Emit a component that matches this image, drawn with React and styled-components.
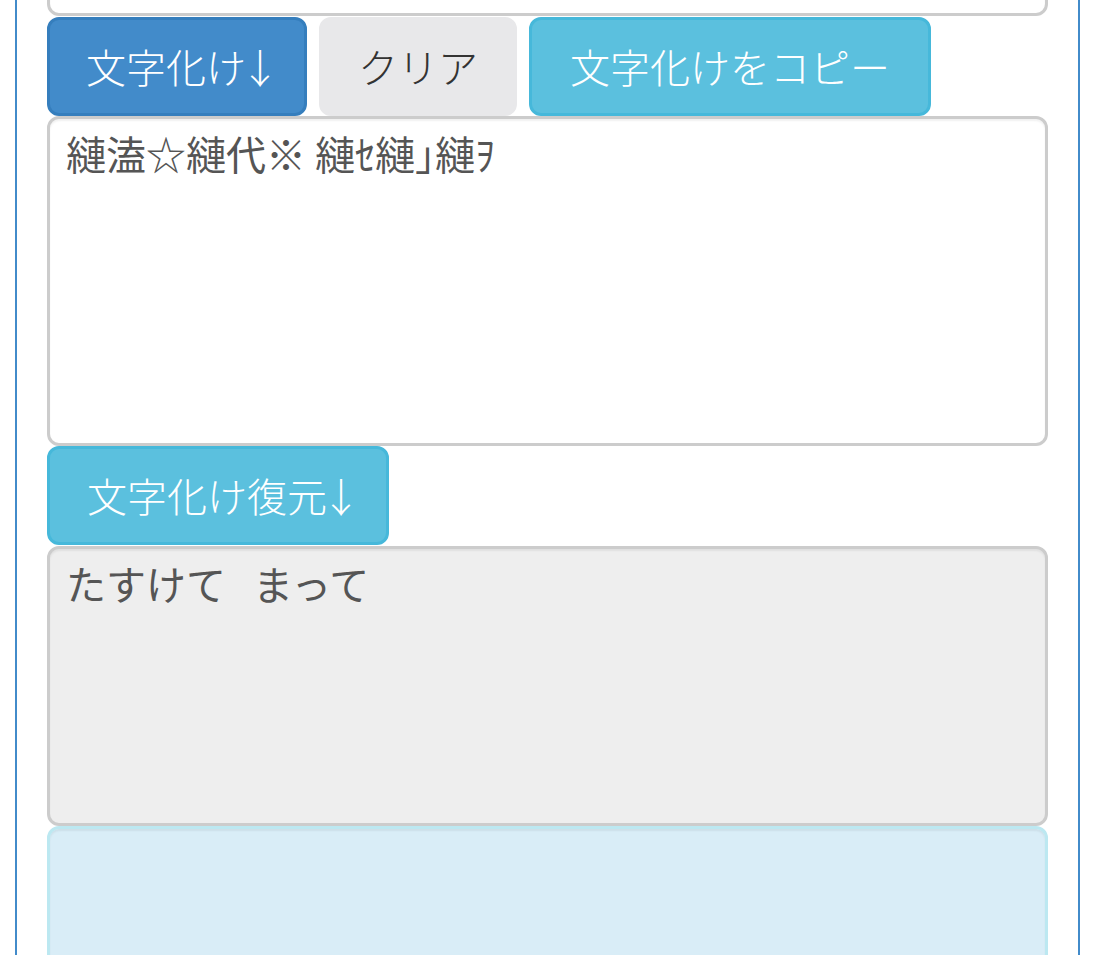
import React from "react";
import styled, { createGlobalStyle } from "styled-components";

const Global = createGlobalStyle`
  html, body { margin: 0; padding: 0; background: #fff; overflow: hidden; }
  body { font-family: "Noto Sans CJK JP", "Noto Sans", sans-serif; }
`;

const Frame = styled.div`
  margin: -314px 0 0 15px;
  width: 1065px;
  min-height: 1400px;
  box-sizing: border-box;
  border-left: 2px solid #428bca;
  border-right: 2px solid #428bca;
  padding: 0 30px;
  display: flex;
  flex-direction: column;
  align-items: stretch;
`;

const Area = styled.textarea`
  display: block;
  box-sizing: border-box;
  width: 100%;
  height: ${(p) => p.$h}px;
  margin: 0 0 ${(p) => p.$mb ?? 0}px;
  padding: 6px 16px;
  border: 3px solid ${(p) => (p.$tone === "info" ? "#bce8f1" : "#ccc")};
  border-radius: 12px;
  background: ${(p) =>
    p.$tone === "info" ? "#d9edf7" : p.$tone === "readonly" ? "#eee" : "#fff"};
  color: #555;
  font-family: "Noto Sans CJK JP", sans-serif;
  font-size: 40px;
  line-height: 57px;
  white-space: pre-wrap;
  resize: none;
  outline: none;
  box-shadow: inset 0 2px 2px rgba(0, 0, 0, 0.06);
  overflow: hidden;
`;

const ButtonRow = styled.div`
  display: flex;
  gap: 12px;
  margin-bottom: ${(p) => p.$mb ?? 0}px;
`;

const palette = {
  primary: { bg: "#428bca", border: "#357ebd", color: "#fff" },
  plain: { bg: "#e8e8ea", border: "#e8e8ea", color: "#333" },
  info: { bg: "#5bc0de", border: "#46b8da", color: "#fff" },
};

const Button = styled.button`
  box-sizing: border-box;
  height: 99px;
  padding: 0 ${(p) => p.$px ?? 36}px;
  border: 3px solid ${(p) => palette[p.$kind].border};
  border-radius: 12px;
  background: ${(p) => palette[p.$kind].bg};
  color: ${(p) => palette[p.$kind].color};
  font-family: "Noto Sans CJK JP", sans-serif;
  font-weight: 300;
  font-size: 40px;
  line-height: 57px;
  white-space: nowrap;
  cursor: pointer;
`;

const Arrow = styled.span`
  display: inline-block;
  width: 22px;
  text-indent: -6px;
  overflow: visible;
  font-weight: 300;
`;

export default function App() {
  return (
    <>
      <Global />
      <Frame>
        <Area $h={330} $mb={1} readOnly value="" />
        <ButtonRow>
          <Button $kind="primary" $px={36}>
            文字化け<Arrow>↓</Arrow>
          </Button>
          <Button $kind="plain" $px={36}>クリア</Button>
          <Button $kind="info" $px={38}>文字化けをコピー</Button>
        </ButtonRow>
        <Area $h={330} readOnly value="縺溘☆縺代※ 縺ｾ縺｣縺ｦ" />
        <ButtonRow $mb={1}>
          <Button $kind="info" $px={37}>
            文字化け復元<Arrow>↓</Arrow>
          </Button>
        </ButtonRow>
        <Area $h={280} $tone="readonly" readOnly value="たすけて   まって" />
        <Area $h={300} $tone="info" readOnly value="" />
      </Frame>
    </>
  );
}
